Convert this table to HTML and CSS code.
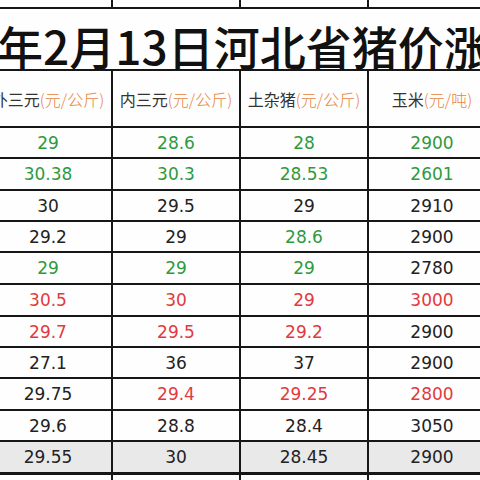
FILE: index.html
```html
<!DOCTYPE html>
<html lang="zh">
<head>
<meta charset="utf-8">
<link rel="stylesheet" href="styles.css">
</head>
<body>
<div class="sheet">
  <div class="cell top"></div><div class="cell top"></div><div class="cell top"></div><div class="cell top"></div>
  <div class="cell title">2021年2月13日河北省猪价涨跌表</div>
  <div class="cell head">外三元<span class="unit">(元/公斤)</span></div>
  <div class="cell head">内三元<span class="unit">(元/公斤)</span></div>
  <div class="cell head">土杂猪<span class="unit">(元/公斤)</span></div>
  <div class="cell head">玉米<span class="unit">(元/吨)</span></div>

  <div class="cell num g">29</div><div class="cell num g">28.6</div><div class="cell num g">28</div><div class="cell num g">2900</div>
  <div class="cell num g">30.38</div><div class="cell num g">30.3</div><div class="cell num g">28.53</div><div class="cell num g">2601</div>
  <div class="cell num">30</div><div class="cell num">29.5</div><div class="cell num">29</div><div class="cell num">2910</div>
  <div class="cell num">29.2</div><div class="cell num">29</div><div class="cell num g">28.6</div><div class="cell num">2900</div>
  <div class="cell num g">29</div><div class="cell num g">29</div><div class="cell num g">29</div><div class="cell num">2780</div>
  <div class="cell num r">30.5</div><div class="cell num r">30</div><div class="cell num r">29</div><div class="cell num r">3000</div>
  <div class="cell num r">29.7</div><div class="cell num r">29.5</div><div class="cell num r">29.2</div><div class="cell num">2900</div>
  <div class="cell num">27.1</div><div class="cell num">36</div><div class="cell num">37</div><div class="cell num">2900</div>
  <div class="cell num">29.75</div><div class="cell num r">29.4</div><div class="cell num r">29.25</div><div class="cell num r">2800</div>
  <div class="cell num">29.6</div><div class="cell num">28.8</div><div class="cell num">28.4</div><div class="cell num">3050</div>
  <div class="cell num alt">29.55</div><div class="cell num alt">30</div><div class="cell num alt">28.45</div><div class="cell num alt">2900</div>

  <div class="cell foot"></div><div class="cell foot"></div><div class="cell foot"></div><div class="cell foot"></div>
</div>
</body>
</html>
```

FILE: styles.css
```css
html, body {
  margin: 0;
  padding: 0;
  background: #ffffff;
  overflow: hidden;
  width: 480px;
  height: 480px;
}

.sheet {
  display: grid;
  grid-template-columns: repeat(4, 128px);
  grid-template-rows: 9px 62px 57px 31px 32px 31px 31px 32px 32px 31px 31px 32px 31px 33px 20px;
  width: 512px;
  margin-left: -15px;
  background: #fefefe;
}

.cell {
  box-sizing: border-box;
  border-right: 2px solid #161616;
  border-bottom: 2px solid #161616;
  display: flex;
  align-items: center;
  justify-content: center;
  white-space: nowrap;
  min-width: 0;
}

.title {
  grid-column: 1 / -1;
  border-right: none;
  font-family: "Noto Sans CJK SC", "Noto Sans", sans-serif;
  font-weight: 500;
  font-size: 46px;
  color: #111111;
  padding-top: 12px;
  padding-right: 8px;
  overflow: visible;
}

.head {
  font-family: "Noto Sans CJK SC", "Noto Sans", sans-serif;
  font-size: 16px;
  color: #333333;
}

.unit {
  color: #e8843c;
  font-weight: 300;
}

.num {
  font-family: "DejaVu Sans", "Verdana", sans-serif;
  font-size: 17px;
  color: #222222;
}

.g {
  color: #2e9a3c;
}

.r {
  color: #e23a3c;
}

.alt {
  background: #e9e9e9;
  border-bottom-width: 3px;
}

.foot {
  border-bottom: none;
}
```
